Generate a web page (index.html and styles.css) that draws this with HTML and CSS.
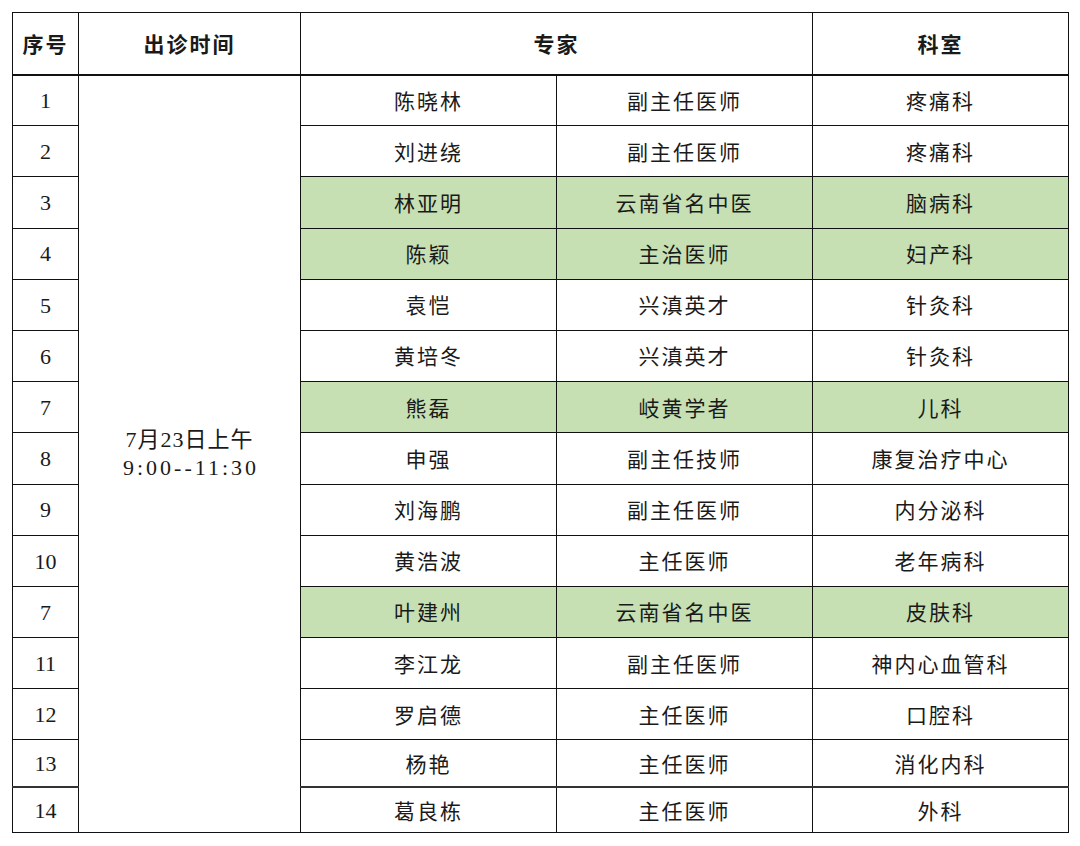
FILE: index.html
```html
<!DOCTYPE html>
<html lang="zh-CN">
<head>
<meta charset="utf-8">
<title>出诊安排</title>
<link rel="stylesheet" href="styles.css">
</head>
<body>
<table class="schedule">
  <colgroup>
    <col class="c-no">
    <col class="c-time">
    <col class="c-name">
    <col class="c-title">
    <col class="c-dept">
  </colgroup>
  <thead>
    <tr class="head">
      <th>序号</th>
      <th>出诊时间</th>
      <th colspan="2">专家</th>
      <th>科室</th>
    </tr>
  </thead>
  <tbody>
    <tr class="row"><td class="num">1</td><td class="time" rowspan="15"><div class="date">7月23日上午</div><div class="hours">9:00--11:30</div></td><td>陈晓林</td><td>副主任医师</td><td>疼痛科</td></tr>
    <tr class="row"><td class="num">2</td><td>刘进绕</td><td>副主任医师</td><td>疼痛科</td></tr>
    <tr class="row hl"><td class="num">3</td><td>林亚明</td><td>云南省名中医</td><td>脑病科</td></tr>
    <tr class="row hl"><td class="num">4</td><td>陈颖</td><td>主治医师</td><td>妇产科</td></tr>
    <tr class="row"><td class="num">5</td><td>袁恺</td><td>兴滇英才</td><td>针灸科</td></tr>
    <tr class="row"><td class="num">6</td><td>黄培冬</td><td>兴滇英才</td><td>针灸科</td></tr>
    <tr class="row hl"><td class="num">7</td><td>熊磊</td><td>岐黄学者</td><td>儿科</td></tr>
    <tr class="row"><td class="num">8</td><td>申强</td><td>副主任技师</td><td>康复治疗中心</td></tr>
    <tr class="row"><td class="num">9</td><td>刘海鹏</td><td>副主任医师</td><td>内分泌科</td></tr>
    <tr class="row"><td class="num">10</td><td>黄浩波</td><td>主任医师</td><td>老年病科</td></tr>
    <tr class="row hl"><td class="num">7</td><td>叶建州</td><td>云南省名中医</td><td>皮肤科</td></tr>
    <tr class="row"><td class="num">11</td><td>李江龙</td><td>副主任医师</td><td>神内心血管科</td></tr>
    <tr class="row"><td class="num">12</td><td>罗启德</td><td>主任医师</td><td>口腔科</td></tr>
    <tr class="row short"><td class="num">13</td><td>杨艳</td><td>主任医师</td><td>消化内科</td></tr>
    <tr class="row shorter"><td class="num">14</td><td>葛良栋</td><td>主任医师</td><td>外科</td></tr>
  </tbody>
</table>
</body>
</html>
```

FILE: styles.css
```css
html, body {
  margin: 0;
  padding: 0;
  background: #ffffff;
}

body {
  padding: 12px 0 0 12px;
  font-family: "Noto Sans CJK SC", "Noto Sans", sans-serif;
  color: #1a1a1a;
}

.schedule {
  border-collapse: collapse;
  table-layout: fixed;
  width: 1056px;
}

.c-no { width: 66px; }
.c-time { width: 222px; }
.c-name { width: 256px; }
.c-title { width: 256px; }
.c-dept { width: 256px; }

.schedule th,
.schedule td {
  border: 1px solid #111;
  padding: 0;
  text-align: center;
  vertical-align: middle;
  font-size: 21px;
  letter-spacing: 2px;
  line-height: 1.2;
}

.schedule th {
  font-weight: 700;
  border-bottom-width: 2px;
}

.head { height: 62px; }
.row { height: 51.2px; }
.row.short { height: 47px; }
.row.shorter { height: 46px; }
.row.short td { border-bottom: 2px solid #333; }

.hl td:not(.num):not(.time) {
  background: #c6e0b4;
}

.num {
  font-family: "Liberation Serif", "Times New Roman", serif;
  font-size: 22px !important;
  letter-spacing: 0 !important;
  padding-top: 2px !important;
}

.time {
  font-family: "Liberation Serif", "Noto Sans CJK SC", serif;
  font-size: 22px !important;
  line-height: 28px !important;
}

.date {
  letter-spacing: 1px;
}

.hours {
  letter-spacing: 3px;
  padding-left: 3px;
}
```
